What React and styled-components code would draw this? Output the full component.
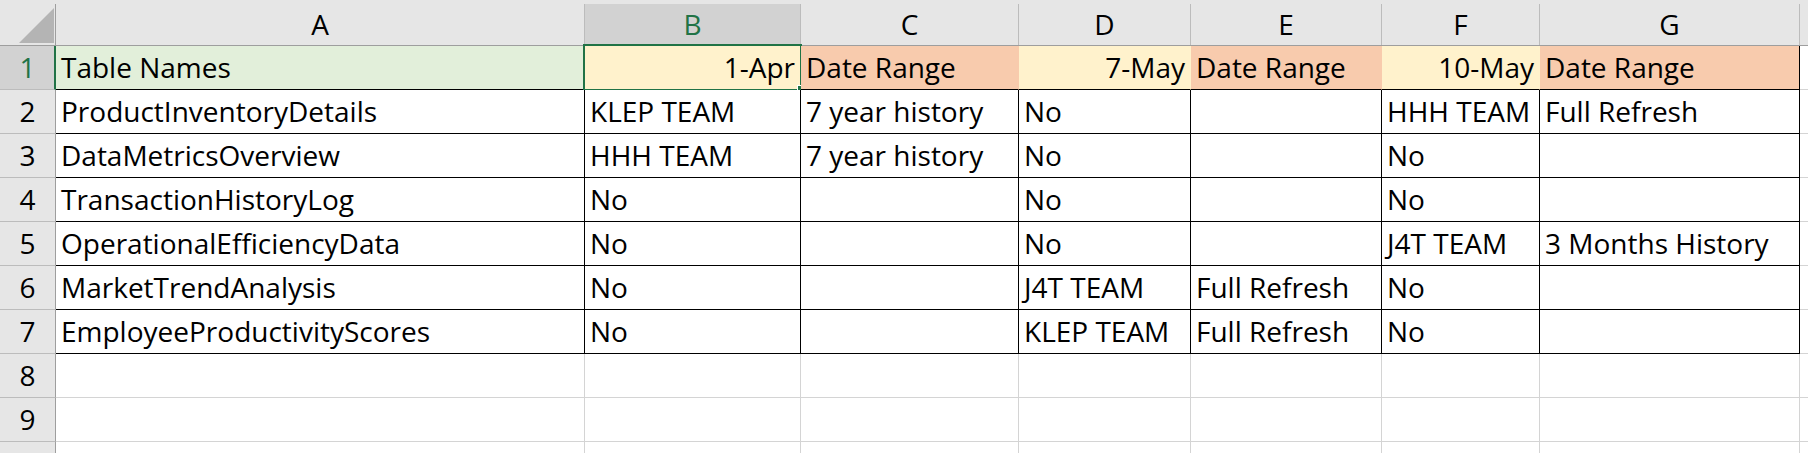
import React from "react";
import styled, { createGlobalStyle, css } from "styled-components";

const GREEN = "#217346";
const GRID = "#d4d4d4";
const BLACK = "#000000";
const HEAD_BG = "#e6e6e6";
const HEAD_SEL = "#d2d2d2";
const HEAD_LINE = "#bcbcbc";
const HEAD_EDGE = "#9e9e9e";

const FILLS = {
  green: "#e2efda",
  yellow: "#fff2cc",
  orange: "#f8cbad",
  white: "#ffffff",
};

const COLS = "56px 529px 216px 218px 172px 191px 158px 260px 1fr";

const Global = createGlobalStyle`
  html, body { margin: 0; padding: 0; background: #ffffff; overflow: hidden; }
  body { width: 1808px; height: 453px; }
  #root { width: 1808px; height: 453px; overflow: hidden; }
  * { box-sizing: border-box; }
`;

const Sheet = styled.div`
  width: 1808px;
  display: flex;
  flex-direction: column;
  font-family: "Open Sans", "Lato", sans-serif;
  font-size: 28px;
  color: #000;
`;

const HeaderRow = styled.div`
  display: grid;
  grid-template-columns: ${COLS};
  height: 46px;
  padding-top: 4px;
  background: ${HEAD_BG};
  border-bottom: 1px solid ${HEAD_EDGE};
`;

const Corner = styled.div`
  border-right: 1px solid ${HEAD_EDGE};
`;

const CornerMark = styled.svg`
  display: block;
  margin: 4px 0 0 19px;
`;

const ColHead = styled.div`
  display: flex;
  justify-content: center;
  line-height: 41px;
  height: 41px;
  border-right: 1px solid ${HEAD_LINE};
  ${(p) =>
    p.$selected &&
    css`
      background: ${HEAD_SEL};
      color: ${GREEN};
      box-shadow: inset 0 -1px 0 ${GREEN};
    `}
  ${(p) => p.$last && css`border-right: none;`}
`;

const Row = styled.div`
  display: grid;
  grid-template-columns: ${COLS};
  height: 44px;
  flex: none;
`;

const RowHead = styled.div`
  background: ${(p) => (p.$selected ? HEAD_SEL : HEAD_BG)};
  color: ${(p) => (p.$selected ? GREEN : "#000")};
  border-right: ${(p) => (p.$selected ? `2px solid ${GREEN}` : `1px solid ${HEAD_EDGE}`)};
  border-bottom: 1px solid ${HEAD_LINE};
  text-align: center;
  line-height: 43px;
  padding-left: ${(p) => (p.$selected ? "1px" : "0")};
`;

const Cell = styled.div`
  position: relative;
  background: ${(p) => FILLS[p.$fill || "white"]};
  border-right: 1px solid ${(p) => p.$rb || "transparent"};
  border-bottom: 1px solid ${(p) => p.$bb};
  line-height: 43px;
  padding: 0 5px;
  white-space: nowrap;
  text-align: ${(p) => (p.$num ? "right" : "left")};
  ${(p) => p.$last && css`border-right: none;`}
`;

const Selection = styled.div`
  position: absolute;
  inset: -2px;
  border: 2px solid ${GREEN};
  pointer-events: none;
`;

const FillHandle = styled.div`
  position: absolute;
  right: -4px;
  bottom: -3px;
  width: 6px;
  height: 6px;
  background: ${GREEN};
  outline: 1px solid #ffffff;
`;

const LETTERS = ["A", "B", "C", "D", "E", "F", "G", ""];

const HEAD_ROW = [
  { t: "Table Names", fill: "green" },
  { t: "1-Apr", fill: "yellow", num: true, sel: true },
  { t: "Date Range", fill: "orange" },
  { t: "7-May", fill: "yellow", num: true },
  { t: "Date Range", fill: "orange" },
  { t: "10-May", fill: "yellow", num: true },
  { t: "Date Range", fill: "orange", edge: true },
];

const DATA = [
  ["ProductInventoryDetails", "KLEP TEAM", "7 year history", "No", "", "HHH TEAM", "Full Refresh"],
  ["DataMetricsOverview", "HHH TEAM", "7 year history", "No", "", "No", ""],
  ["TransactionHistoryLog", "No", "", "No", "", "No", ""],
  ["OperationalEfficiencyData", "No", "", "No", "", "J4T TEAM", "3 Months History"],
  ["MarketTrendAnalysis", "No", "", "J4T TEAM", "Full Refresh", "No", ""],
  ["EmployeeProductivityScores", "No", "", "KLEP TEAM", "Full Refresh", "No", ""],
];

export default function App() {
  return (
    <>
      <Global />
      <Sheet>
        <HeaderRow>
          <Corner>
            <CornerMark width="35" height="35" viewBox="0 0 35 35">
              <polygon points="35,0 35,35 0,35" fill="#b4b4b4" />
            </CornerMark>
          </Corner>
          {LETTERS.map((l, i) => (
            <ColHead key={i} $selected={l === "B"} $last={i === LETTERS.length - 1}>
              {l}
            </ColHead>
          ))}
        </HeaderRow>

        <Row>
          <RowHead $selected>1</RowHead>
          {HEAD_ROW.map((c, i) => (
            <Cell
              key={i}
              $fill={c.fill}
              $num={c.num}
              $rb={c.edge ? BLACK : FILLS[c.fill]}
              $bb={BLACK}
            >
              {c.t}
              {c.sel && (
                <>
                  <Selection />
                  <FillHandle />
                </>
              )}
            </Cell>
          ))}
          <Cell $last $bb={GRID} />
        </Row>

        {DATA.map((r, ri) => (
          <Row key={ri}>
            <RowHead>{ri + 2}</RowHead>
            {r.map((t, ci) => (
              <Cell key={ci} $rb={BLACK} $bb={BLACK}>
                {t}
              </Cell>
            ))}
            <Cell $last $bb={GRID} />
          </Row>
        ))}

        {[8, 9, 10].map((n) => (
          <Row key={n}>
            <RowHead>{n < 10 ? n : ""}</RowHead>
            {LETTERS.map((_, ci) => (
              <Cell key={ci} $rb={GRID} $bb={GRID} $last={ci === LETTERS.length - 1} />
            ))}
          </Row>
        ))}
      </Sheet>
    </>
  );
}
